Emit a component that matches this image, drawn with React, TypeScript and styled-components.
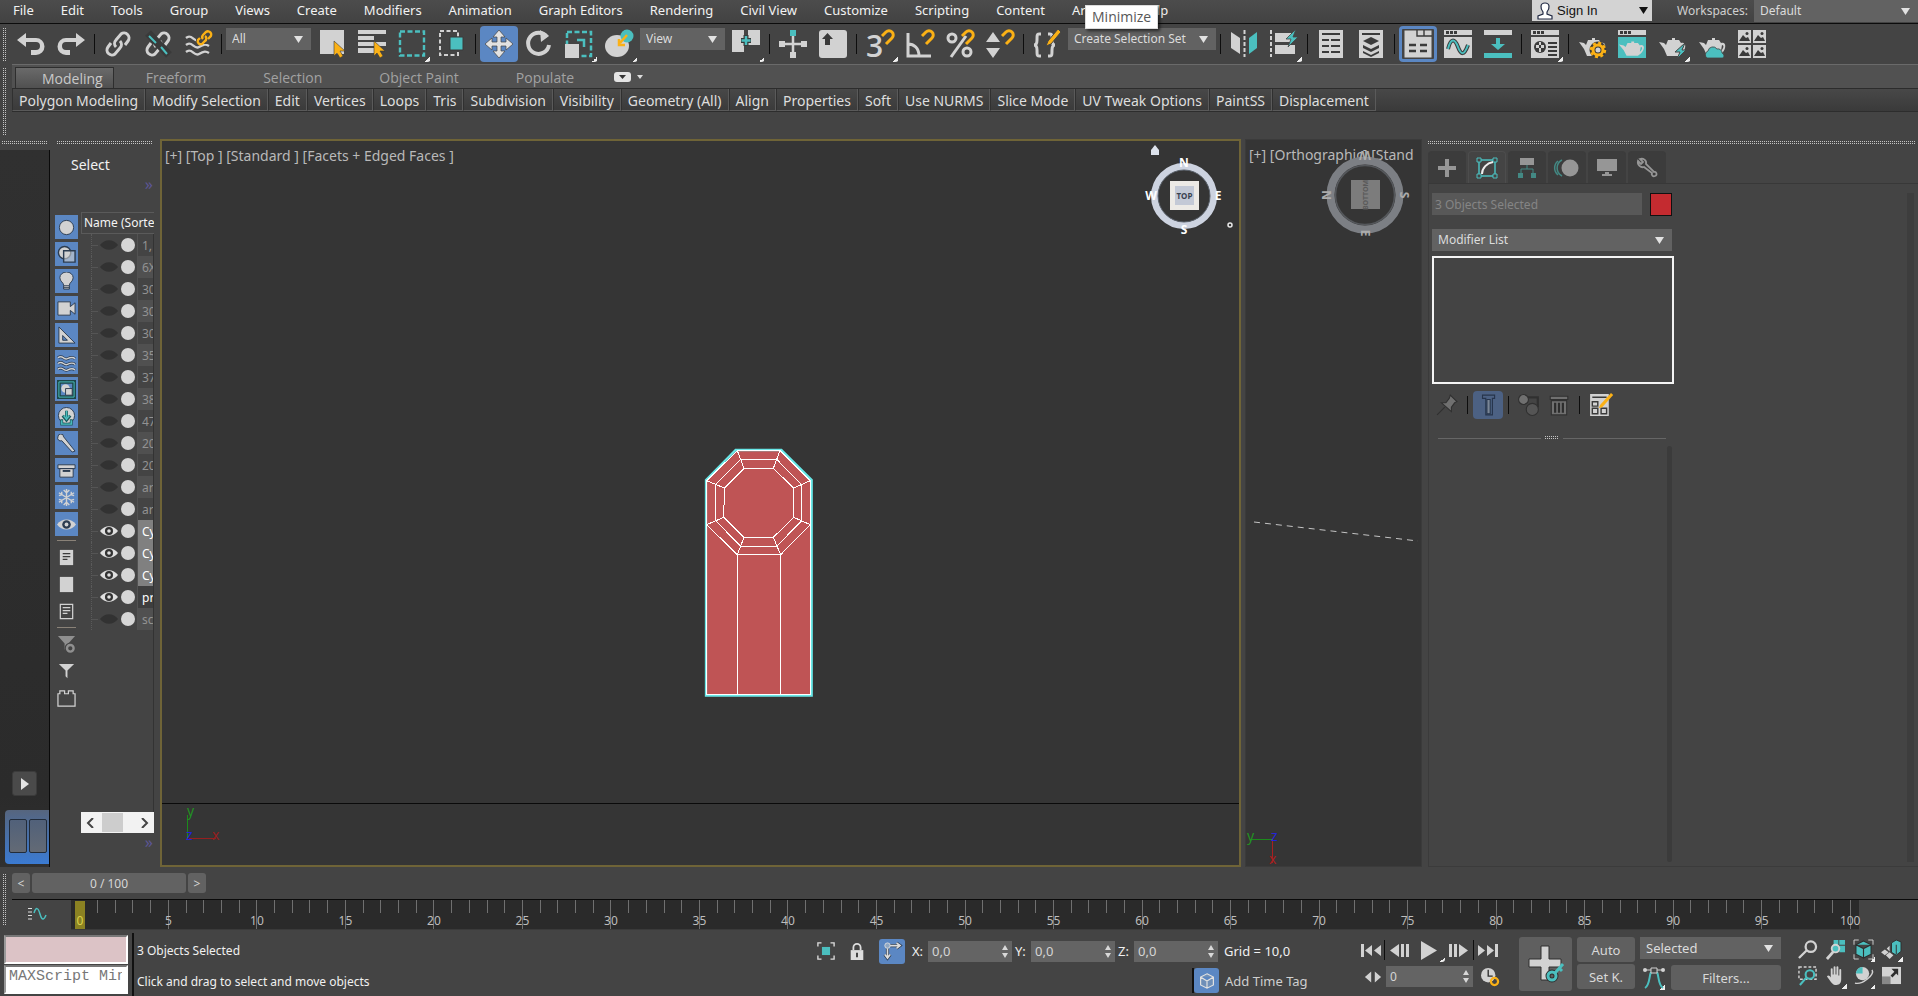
import React from 'react';
import styled, { createGlobalStyle, css } from 'styled-components';

const Global = createGlobalStyle`
  * { box-sizing: border-box; }
  body { margin: 0; background: #444; color: #e4e4e4; font: 12px/16px 'Noto Sans', 'Open Sans', sans-serif; overflow: hidden; }
  button, input, select { font: inherit; color: inherit; margin: 0; padding: 0; border: 0; border-radius: 0; background: none; }
  ul { list-style: none; margin: 0; padding: 0; }
  svg { display: block; }
`;

const L = '#d2d2d2';
const T = '#4bbfbf';
const Y = '#fbb116';
const D = '#3a3a3a';

const dots = css`
  background-image: linear-gradient(90deg, transparent 50%, #444 50%), linear-gradient(#c4c4c4 50%, transparent 50%);
  background-size: 2px 2px;
`;

const Page = styled.div`display: flex; flex-direction: column; height: 100vh;`;
const VGrip = styled.i`flex: none; width: 3px; margin: 4px 6px 3px 3px; ${dots}`;
const HGrip = styled.i<{ $inset?: number }>`flex: none; display: block; height: 4px; margin: 2px 2px 0 ${p => p.$inset ?? 0}px; ${dots}`;

/* Menu bar */
const MenuBar = styled.header`
  display: flex; justify-content: space-between; height: 24px; position: relative;
  border-bottom: 1px solid #0c0c0c; background: linear-gradient(#4c4c4c, #424242);
`;
const Menus = styled.nav`display: flex; height: 20px;`;
const MenuItem = styled.button`padding: 0 14px 0 13px; font-family: 'Noto Sans', sans-serif; font-size: 13px; line-height: 20px; color: #f2f2f2; white-space: nowrap;`;
const Account = styled.div`display: flex; align-items: flex-start; color: #cfcfcf;`;
const SignIn = styled.button`
  display: flex; align-items: center; gap: 4px; width: 120px; height: 21px; padding: 0 4px 0 5px; margin-right: 25px;
  background: #d3d3d3; color: #111; font: 13px 'Liberation Sans', sans-serif;
  span { flex: 1; text-align: left; }
`;
const WorkLabel = styled.label`font-size: 12px; line-height: 21px; margin-right: 6px;`;
const Tooltip = styled.div`
  position: absolute; left: 1085px; top: 5px; z-index: 3; height: 24px; padding: 0 6px;
  background: #fff; border: 1px solid #dcdcdc; box-shadow: 2px 2px 3px #0009; color: #575757;
  font: 14px/22px 'Open Sans', sans-serif;
`;

/* Select box */
const SelectWrap = styled.div<{ $w: number; $h?: number }>`
  display: grid; flex: none; width: ${p => p.$w}px; height: ${p => p.$h ?? 22}px; background: #626262; align-items: center;
  > * { grid-area: 1 / 1; }
  > svg { justify-self: end; margin-right: 8px; pointer-events: none; }
`;
const Native = styled.select`appearance: none; width: 100%; height: 100%; padding-left: 6px; color: #dcdcdc; outline: 0;`;
const Down = ({ c = '#e2e2e2' }: { c?: string }) => <svg width="9" height="7" viewBox="0 0 9 7"><path d="M0 0h9L4.500 7z" fill={c} /></svg>;
function Select({ w, h, label, value, id }: { w: number; h?: number; label: string; value: string; id?: string }) {
  return <SelectWrap $w={w} $h={h}><Native id={id} aria-label={label}><option>{value}</option></Native><Down /></SelectWrap>;
}

/* Main toolbar */
const ToolBar = styled.div`display: flex; height: 40px;`;
const Tools = styled.div`display: flex; gap: 2px; > div { margin-top: 4px; font-size: 12px; }`;
const ToolButton = styled.button<{ $on?: boolean; $ring?: boolean; $fly?: boolean }>`
  flex: none; display: grid; place-items: center; width: 38px; height: 36px; margin-top: 2px; border-radius: 4px;
  ${p => p.$on && 'background: #5b87c3;'}
  ${p => p.$ring && 'box-shadow: inset 0 0 0 3px #5b87c3;'}
  ${p => p.$fly && 'background: linear-gradient(135deg, transparent 50%, #eee 50%) right 1px bottom 0 / 5px 5px no-repeat;'}
`;
const Sep = styled.i<{ $h?: number }>`
  flex: none; width: 5px; height: ${p => p.$h ?? 20}px; margin-top: 10px;
  background: linear-gradient(#0d0d0d, #0d0d0d) center / 1px 100% no-repeat;
`;

const link = <g fill="none" stroke={L} strokeWidth="3"><path d="M12 17a5 5 0 0 1 0-7l5-6a5 5 0 0 1 7 7l-3 4" /><path d="M16 11a5 5 0 0 1 0 7l-5 6a5 5 0 0 1-7-7l3-4" /></g>;
const magnet = <path d="M16 6l4-4a4 4 0 0 1 6 6l-6 6" fill="none" stroke={Y} strokeWidth="3" />;
const cursor = <path d="M16 11v15l3-3 3 5 3-2-3-5h5z" fill={Y} stroke={D} strokeWidth=".6" />;
const teapot = <path d="M10 10h4V8h3v2h4l2 3c5-2 6 5 1 10l-3 3H9l-3-7-5-7 5 1 2 2zM24 15l-1 6c3-3 3-6 1-6z" fill={L} fillRule="evenodd" />;
const windowTop = <><path d="M0 0h28v5H0z" fill={L} /><path d="M2 1h3v3H2zM6 1h3v3H6zM10 1h3v3h-3z" fill={D} /></>;
const waves = (c: string, w: number) => <path d="M2 8c6-5 8 5 13 2s7-3 10-1M2 15c6-5 8 5 13 2s7-3 10-1M2 22c6-5 8 5 13 2s7-3 10-1" fill="none" stroke={c} strokeWidth={w} />;

const art: Record<string, React.ReactNode> = {
  undo: <path d="M9 3v5h10a8 8 0 0 1 0 17h-5v-5h5a4 4 0 0 0 0-8H9v5L0 10z" fill={L} />,
  redo: <path d="M19 3v5H9a8 8 0 0 0 0 17h4v-5H9a4 4 0 0 1 0-8h10v5l9-7z" fill={L} />,
  link,
  unlink: <><g>{link}</g><path d="M4 3l21 22" stroke={D} strokeWidth="8" /><path d="M5 6l7 7M17 17l6 7" stroke={T} strokeWidth="2" /></>,
  bind: <>{waves(L, 2.4)}<path d="M12 0h16v14H12z" fill="#444" /><g fill="none" stroke={Y} strokeWidth="2.400"><path d="M19 9a3 3 0 0 1 0-4l3-3a3 3 0 0 1 4 5l-2 2" /><path d="M21 6a3 3 0 0 1 0 5l-3 3a3 3 0 0 1-4-4l2-2" /></g></>,
  pick: <><path d="M2 0h24v24H2z" fill={L} />{cursor}</>,
  byName: <><path d="M0 0h28v4H0zM0 6h16v4H0zM0 12h28v4H0zM0 18h16v5H0z" fill={L} />{cursor}</>,
  region: <path d="M2 1.500h24v24H2z" fill="none" stroke={T} strokeWidth="2.400" strokeDasharray="5 2.500" />,
  windowSel: <><path d="M2 1h18v24H2z" fill="none" stroke={L} strokeWidth="2" strokeDasharray="4 2.500" /><path d="M12 7h13v13H12z" fill={T} stroke={D} /></>,
  move: <path d="M14 0l6 7h-4v5h5V8l7 6-7 6v-4h-5v5h4l-6 7-6-7h4v-5H7v4l-7-6 7-6v4h5V7H8z" fill="#e2e2e2" stroke="#444" strokeWidth=".7" />,
  rotate: <><path d="M22 7a10.500 10.500 0 1 0 2 8" fill="none" stroke={L} strokeWidth="4" /><path d="M15 0l9 6-8 6z" fill={L} /></>,
  scale: <><path d="M2 2h24v24H2z" fill="none" stroke={T} strokeWidth="2.500" strokeDasharray="5 2.500" /><path d="M0 14h14v14H0z" fill={L} /><path d="M12 10h7v7" fill="none" stroke={T} strokeWidth="2.500" /></>,
  place: <><ellipse cx="12" cy="16" rx="12" ry="11" fill={L} /><circle cx="22" cy="6" r="6.500" fill={T} /><path d="M22 5l-7 8M14 9v6h6" fill="none" stroke={Y} strokeWidth="2.500" /></>,
  pivot: <><path d="M0 0h12v22H0zM16 0h12v15H16z" fill={L} /><path d="M14 5v11M9 10.500h10" stroke={D} strokeWidth="5" /><path d="M14 6v9M9.500 10.500h9" stroke={T} strokeWidth="2.500" /></>,
  manip: <><path d="M14 6v18M4 14h20" stroke={L} strokeWidth="2.500" /><path d="M0 11h6v6H0zM22 11h6v6h-6zM11 22h6v6h-6z" fill={L} /><path d="M11 0h6v6h-6z" fill={T} /></>,
  keyb: <><rect width="28" height="28" rx="3" fill={L} /><path d="M8.500 3l5.500 6h-3v6H6V9H3z" fill={D} /></>,
  snap: <><text x="0" y="27" fontSize="30" fontWeight="600" fontFamily="Open Sans, sans-serif" fill={L}>3</text>{magnet}</>,
  angle: <><path d="M2 3v23h23M2 14c6 0 11 4 11 12" fill="none" stroke={L} strokeWidth="3" />{magnet}</>,
  percent: <><g fill="none" stroke={L} strokeWidth="3"><circle cx="6" cy="8" r="4" /><circle cx="21" cy="22" r="4" /><path d="M20 6L5 27" /></g>{magnet}</>,
  spinner: <><path d="M7 2l7 10H0zM7 28l7-10H0z" fill={L} />{magnet}</>,
  braces: <><path d="M8 4H6c-2 0-2 1-2 6 0 3-1 5-3 5 2 0 3 2 3 5 0 5 0 6 2 6h2M15 4h2c2 0 2 1 2 6 0 3 1 5 3 5-2 0-3 2-3 5 0 5 0 6-2 6h-2" fill="none" stroke={L} strokeWidth="3" /><path d="M25-1l3 3-10 12-5 2 2-5z" fill={Y} stroke="#444" /></>,
  mirror: <><path d="M1 2l9 6v16l-9-6z" fill={L} /><path d="M27 2l-8 6v16l8-6z" fill={T} /><path d="M14.500 0v27" stroke={L} strokeWidth="2" strokeDasharray="4 2" /></>,
  align: <><path d="M1 0v27" stroke={L} strokeWidth="2" strokeDasharray="4 2" /><path d="M5 3h16v9H5zM5 15h20v9H5z" fill={L} /><path d="M26-1l-10 10h5l-3 8 10-10h-5z" fill={T} stroke="#444" strokeWidth=".8" /></>,
  explorer: <><path d="M2 0h24v28H2z" fill={L} /><path d="M5 4h18M5 10h7M14 10h9M5 16h7M14 16h9M5 22h7M14 22h9" stroke={D} strokeWidth="2" /></>,
  layers: <><path d="M2 0h24v28H2z" fill={L} /><path d="M5 4h18" stroke={D} strokeWidth="2" /><path d="M14 7l8 4-8 4-8-4zM6 15l8 4 8-4v3l-8 4-8-4zM6 21l8 4 8-4v2l-8 4-8-4z" fill={D} /></>,
  ribbon: <><path d="M0 0h28v28H0z" fill={L} stroke="#444" /><path d="M13 0v6h15M20 0v6" fill="none" stroke={D} strokeWidth="1.400" /><path d="M5 15h7M16 15h7M5 21h7M16 21h7" stroke={D} strokeWidth="2.400" /></>,
  curve: <>{windowTop}<path d="M0 7h28v21H0z" fill={L} /><path d="M4 19c3-12 7-10 10-2s6 9 10-2" fill="none" stroke={D} strokeWidth="4" /><path d="M4 19c3-12 7-10 10-2s6 9 10-2" fill="none" stroke={T} strokeWidth="2" /></>,
  schematic: <><path d="M0 0h28v5H0z" fill={L} /><path d="M12 8h4v6h5l-7 6-7-6h5zM0 23h28v5H0z" fill={T} /></>,
  material: <>{windowTop}<path d="M0 7h28v21H0z" fill={L} /><circle cx="9" cy="17" r="6" fill={D} /><path d="M5 15h3v3H5zM10 15h3v3h-3zM8 12h2v3H8zM8 18h2v4H8z" fill={L} /><path d="M17 13h9M17 17h9M17 21h9M17 25h9" stroke={D} strokeWidth="1.800" /></>,
  setup: <>{teapot}<circle cx="20" cy="20" r="5.500" fill="none" stroke={D} strokeWidth="6" /><circle cx="20" cy="20" r="5" fill="none" stroke={Y} strokeWidth="3" /><circle cx="20" cy="20" r="7" fill="none" stroke={Y} strokeWidth="2.500" strokeDasharray="3 2.500" /></>,
  frame: <>{windowTop}<path d="M0 7h28v21H0z" fill={T} /><g transform="translate(0 5) scale(.95 .8)">{teapot}</g></>,
  render: <>{teapot}<path d="M27 13l-10 9h5l-3 7 9-9h-4z" fill={T} stroke="#444" /></>,
  cloud: <>{teapot}<path d="M9 28a4 4 0 0 1 1-7 5 5 0 0 1 9-2 4 4 0 0 1 5 4 3 3 0 0 1 1 5z" fill={T} stroke="#444" strokeWidth=".8" /></>,
  gallery: <>{[0, 15].map(x => [0, 15].map(y => <g key={`${x}-${y}`} transform={`translate(${x} ${y})`}><path d="M0 0h13v13H0z" fill={L} /><path d="M1 11l4-6 3 3 2-1 2 4z" fill={D} /><circle cx="9" cy="3.500" r="1.500" fill={D} /></g>))}</>,
};
function Art({ n, s = 28 }: { n: string; s?: number }) {
  return <svg width={s} height={s} viewBox="0 0 28 28" overflow="visible" aria-hidden="true">{art[n]}</svg>;
}
function Tool({ n, on, ring, fly }: { n: string; on?: boolean; ring?: boolean; fly?: boolean }) {
  return <ToolButton aria-label={n} $on={on} $ring={ring} $fly={fly}><Art n={n} /></ToolButton>;
}

/* Ribbon */
const RibbonArea = styled.section`display: flex; height: 75px;`;
const Ribbon = styled.div`flex: 1; min-width: 0; font-family: 'Open Sans', sans-serif; font-size: 14px;`;
const RibbonTabs = styled.div`display: flex; align-items: flex-end; height: 25px; padding-left: 3px; border-top: 1px solid #6a6a6a; border-bottom: 1px solid #2c2c2c; background: #515151;`;
const RibbonTab = styled.button<{ $on?: boolean }>`
  height: 21px; padding: 0 28px 0 29px; line-height: 21px; color: #a2a2a2; white-space: nowrap;
  ${p => p.$on && 'padding: 0 10px 0 26px; margin-right: 3px; color: #c9c9c9; border: 1px solid #2e2e2e; border-bottom: 0; background: linear-gradient(#6a6a6a, #505050);'}
`;
const RibbonTools = styled.div`display: flex; align-items: center; gap: 6px; height: 18px; margin-left: 12px; align-self: center;`;
const RibbonPanels = styled.div`display: flex; height: 23px; border-bottom: 1px solid #2d2d2d; background: linear-gradient(#484848, #3a3a3a);`;
const RibbonPanel = styled.button`padding: 1px 6px 0; line-height: 22px; color: #dedede; white-space: nowrap; border: 1px solid #5a5a5a; border-left-color: #303030; border-top: 0; font-family: 'Noto Sans', sans-serif;`;

/* Workspace */
const Work = styled.main`display: flex; flex: 1; min-height: 0;`;
const Rail = styled.aside`display: flex; flex-direction: column; flex: none; width: 50px;`;
const RailBody = styled.div`
  flex: 1; margin-top: 5px; display: flex; flex-direction: column; justify-content: flex-end; align-items: flex-start;
  background: linear-gradient(#303030, #2b2b2b 90%, #303030); border-right: 1px solid #0a0a0a;
`;
const PlayTab = styled.button`display: grid; place-items: center; width: 25px; height: 25px; margin: 0 0 14px 12px; border-radius: 3px; background: #4a4a4a; border: 1px solid #3b3b3b;`;
const LayoutTab = styled.button`
  display: flex; align-self: stretch; gap: 2px; height: 54px; margin: 0 0 3px 5px; padding: 9px 2px 11px 4px; border-radius: 4px 0 0 4px;
  background: linear-gradient(#56657e, #3b7bd3);
  i { flex: 1; border: 1px solid #222c3a; border-radius: 2px; background: linear-gradient(#51617a, #636a75); }
`;
const Explorer = styled.aside`display: flex; flex-direction: column; flex: none; width: 110px; padding: 0 6px 16px 5px;`;
const ExplorerTitle = styled.h2`margin: 10px 0 0 16px; font-size: 14px; line-height: 20px; font-weight: 400; color: #f2f2f2;`;
const More = styled.button`align-self: flex-end; height: 18px; margin-right: 1px; font-size: 16px; line-height: 12px; color: #5c5696;`;
const ExplorerBody = styled.div`display: flex; flex: 1; min-height: 0; gap: 3px; margin-top: 19px;`;
const Filters = styled.div`display: flex; flex-direction: column; align-items: center; width: 23px; padding-top: 3px; gap: 3px;`;
const FilterButton = styled.button<{ $on?: boolean }>`display: grid; place-items: center; flex: none; width: 23px; height: 24px; ${p => p.$on && 'background: #5b87c3;'}`;
const FilterRule = styled.hr`width: 19px; height: 1px; margin: 1px 0; border: 0; background: #8a8278;`;
const Tree = styled.div`display: flex; flex-direction: column; width: 73px; overflow: hidden;`;
const TreeHead = styled.div`height: 22px; padding-left: 2px; line-height: 20px; white-space: nowrap; border: 1px solid #5a5a5a; border-right: 0; color: #f4f4f4; flex: none;`;
const TreeRows = styled.ul`flex: 1; border-right: 1px solid #333;`;
const TreeRow = styled.li<{ $state: string }>`
  display: grid; grid-template-columns: 18px 20px 18px 1fr; align-items: center; justify-items: center; height: 22px; color: #929292;
  > i { width: 14px; height: 14px; border-radius: 50%; background: #d6d6d6; }
  > span { justify-self: stretch; height: 22px; padding-left: 4px; line-height: 24px; overflow: hidden; border-left: 1px solid #525252; white-space: nowrap; }
  &:nth-child(even) > span { background: #505050; }
  ${p => p.$state === 'selected' && '&& > span { background: #808080; color: #fff; }'}
  ${p => p.$state === 'shown' && '&& > span { background: #3e3e3e; color: #fff; }'}
`;
const Branch = styled.b`align-self: stretch; justify-self: end; width: 8px; border-left: 1px dotted #5a5a5a; background: linear-gradient(#555, #555) left center / 6px 1px no-repeat;`;
const ScrollBar = styled.div`
  display: flex; justify-content: space-between; align-items: center; height: 21px; padding: 0 5px; background: #f2f2f2; flex: none;
  i { width: 21px; height: 19px; background: #cdcdcd; margin-right: 10px; }
`;

/* Viewports */
const Viewport = styled.section<{ $active?: boolean }>`
  position: relative; overflow: hidden; background: #353535; min-width: 0;
  ${p => p.$active ? 'flex: 1; border: 2px solid #6f6437;' : 'flex: none; width: 177px; margin-left: 4px; border: 1px solid #3b3b3b;'}
`;
const ViewLabel = styled.div`padding: 5px 0 0 3px; font-size: 14px; line-height: 20px; color: #b9b9b9; white-space: pre;`;
const Pinned = styled.svg<{ $x: string; $y: string; $right?: boolean }>`
  position: absolute; top: ${p => p.$y}; ${p => (p.$right ? 'right' : 'left')}: ${p => p.$x}; overflow: visible;
`;
const Horizon = styled.i`position: absolute; left: 0; right: 0; bottom: 61px; height: 1px; background: #0a0a0a;`;

/* Command panel */
const Command = styled.aside`display: flex; flex-direction: column; flex: none; width: 496px; padding-left: 6px;`;
const CommandTabs = styled.div`display: flex; gap: 2px; margin-top: 6px; border-bottom: 1px solid #383838;`;
const CommandTab = styled.button<{ $on?: boolean }>`display: grid; place-items: center; width: 38px; height: 32px; border-radius: 4px 4px 0 0; background: ${p => (p.$on ? '#444' : '#3c3c3c')}; border: 1px solid ${p => (p.$on ? '#4d4d4d' : '#3c3c3c')}; border-bottom: 0;`;
const CommandBody = styled.div`display: flex; justify-content: space-between; flex: 1; padding: 9px 4px 4px 3px; border-left: 1px solid #3b3b3b; border-bottom: 1px solid #3b3b3b;`;
const Stack = styled.div`display: flex; flex-direction: column; width: 242px;`;
const NameRow = styled.div`display: flex; gap: 8px; margin-bottom: 13px;`;
const NameField = styled.input`width: 210px; height: 22px; padding-left: 3px; background: #585858; color: #858585;`;
const Swatch = styled.button`width: 22px; height: 23px; background: #c42b30; border: 1px solid #111;`;
const ModifierBox = styled.div`height: 128px; margin-top: 5px; border: 2px solid #f4f4f4;`;
const StackTools = styled.div`display: flex; align-items: center; height: 28px; margin-top: 7px; > i { margin: 0 3px; } `;
const StackButton = styled.button<{ $on?: boolean }>`display: grid; place-items: center; width: 30px; height: 28px; border-radius: 4px; ${p => p.$on && 'background: #4c6183;'}`;
const Divider = styled.div`display: flex; align-items: center; gap: 4px; margin: 17px 8px 0 6px; &::before, &::after { content: ''; flex: 1; height: 1px; background: #666; } i { width: 14px; height: 4px; ${dots} }`;
const Rollout = styled.div`align-self: flex-end; flex: 1; width: 5px; margin: 6px 2px 0 0; border-radius: 3px; background: #3b3b3b;`;
const OuterTrack = styled.div`width: 7px; background: #3d3d3d;`;

/* Time line */
const TimeArea = styled.section`display: flex; height: 63px;`;
const TimeGrip = styled(VGrip)`margin-top: 7px; margin-bottom: 4px;`;
const TimeMain = styled.div`flex: 1; min-width: 0;`;
const Slider = styled.div`display: flex; gap: 2px; height: 32px; padding-top: 6px;`;
const SliderButton = styled.button<{ $w: number }>`width: ${p => p.$w}px; height: 20px; border-radius: 3px; background: #626262; color: #d6d6d6; line-height: 21px; text-align: center;`;
const Ruler = styled.div`display: flex; height: 31px; border-top: 1px solid #0a0a0a; padding-right: 59px;`;
const MiniCurve = styled.button`flex: none; width: 59px; padding: 0 0 2px 16px; text-align: left;`;
const Frames = styled.div`display: flex; flex: 1; min-width: 0; background: #2a2a2a; border-bottom: 1px solid #3a3a3a;`;
const Frame = styled.div<{ $major: boolean; $now: boolean }>`
  flex: 1 1 0; width: 0; display: flex; justify-content: center; align-items: flex-end; color: #bdbdbd; line-height: 16px; white-space: nowrap;
  background: linear-gradient(#707070, #707070) center top / 1px ${p => (p.$major ? 30 : 13)}px no-repeat;
  ${p => p.$now && 'background: linear-gradient(#8b8222, #8b8222) center bottom / 10px 28px no-repeat; color: #dcd24a;'}
`;

/* Status bar */
const Status = styled.footer`display: flex; height: 66px; color: #f0f0f0;`;
const Listener = styled.div`display: flex; flex-direction: column; flex: none; gap: 1px; width: 124px; margin: 5px 4px 2px 4px;`;
const ListenerLine = styled.input<{ $pink?: boolean }>`
  width: 124px; height: 29px; padding: 0 4px 6px 3px; color: #777; font: 15px 'Liberation Mono', monospace;
  background: ${p => (p.$pink ? '#dcc3c6' : '#fff')}; border: 2px solid #fff; border-top-color: #777; border-left-color: #999;
  &::placeholder { color: #777; opacity: 1; }
`;
const Prompt = styled.div`flex: 1; min-width: 0; padding: 10px 0 0 3px; border-left: 2px solid #111; margin-top: 3px; p { margin: 0 0 15px; line-height: 16px; font-size: 12px; white-space: nowrap; }`;
const Transform = styled.div`display: flex; flex-direction: column; flex: none; width: 544px;`;
const CoordRow = styled.div`display: flex; align-items: center; height: 26px; margin-top: 8px; font-size: 13px;`;
const TagRow = styled.div`display: flex; align-items: center; gap: 6px; height: 25px; margin: 4px 0 0 375px; border-left: 2px solid #111; color: #cfcfcf; font-size: 13px;`;
const IconButton = styled.button<{ $on?: boolean; $w: number }>`flex: none; display: grid; place-items: center; width: ${p => p.$w}px; height: 25px; border-radius: 3px; ${p => p.$on && 'background: #5b87c3;'}`;
const Coords = styled.div`display: flex; align-items: center; margin-left: 4px;`;
const CoordLabel = styled.label`width: 19px; padding-left: 3px; line-height: 22px; white-space: nowrap;`;
const GridSize = styled.span`margin-left: 6px; white-space: nowrap;`;
const SpinBox = styled.div<{ $w: number }>`display: flex; align-items: center; flex: none; width: ${p => p.$w}px; height: 21px; padding: 0 4px; background: #646464; color: #d5d5d5; input { flex: 1; width: 0; height: 21px; }`;
function Spin({ w, label, value, id }: { w: number; label: string; value: string; id: string }) {
  return <SpinBox $w={w}><input id={id} aria-label={label} defaultValue={value} /><svg width="6" height="13" viewBox="0 0 6 13"><path d="M3 0l3 5H0zM3 13l3-5H0z" fill="#d8d8d8" /></svg></SpinBox>;
}
const Playback = styled.div`display: flex; flex-direction: column; flex: none; width: 158px; padding-top: 7px;`;
const PlayRow = styled.div`display: flex; align-items: center; height: 25px; gap: 1px; margin-bottom: 2px; > i { margin: 0; }`;
const Keys = styled.div`display: flex; flex: none; gap: 5px; width: 274px; padding-top: 7px; font-size: 13px;`;
const SoftButton = styled.button<{ $w: number; $h: number }>`display: grid; place-items: center; width: ${p => p.$w}px; height: ${p => p.$h}px; border-radius: 3px; background: #5f5f5f; color: #d8d8d8;`;
const Col = styled.div`display: flex; flex-direction: column; gap: 2px;`;
const TangentRow = styled.div`display: flex; align-items: flex-end; gap: 3px; height: 29px;`;
const TangentButton = styled(IconButton)`background: linear-gradient(135deg, transparent 50%, #eee 50%) right 3px bottom 0 / 5px 5px no-repeat;`;
const PlayButton = styled(IconButton)`background: linear-gradient(135deg, transparent 50%, #eee 50%) right 0 bottom 0 / 5px 5px no-repeat;`;
const NavGrid = styled.div`display: grid; flex: none; grid-template: 26px 27px / repeat(4, 28px); width: 125px; margin-top: 6px;`;
const NavButton = styled.button<{ $fly?: boolean }>`display: grid; place-items: center; ${p => p.$fly && 'background: linear-gradient(135deg, transparent 50%, #eee 50%) right 2px bottom 0 / 5px 5px no-repeat;'}`;

const menus = ['File', 'Edit', 'Tools', 'Group', 'Views', 'Create', 'Modifiers', 'Animation', 'Graph Editors', 'Rendering', 'Civil View', 'Customize', 'Scripting', 'Content', 'Arnold', 'Help'];
const panels = ['Polygon Modeling', 'Modify Selection', 'Edit', 'Vertices', 'Loops', 'Tris', 'Subdivision', 'Visibility', 'Geometry (All)', 'Align', 'Properties', 'Soft', 'Use NURMS', 'Slice Mode', 'UV Tweak Options', 'PaintSS', 'Displacement'];
const rows: [string, string][] = [
  ...['1,', '6X', '30', '30', '30', '35', '37', '38', '47', '20', '20', 'ar', 'ar'].map(n => [n, 'hidden'] as [string, string]),
  ['Cy', 'selected'], ['Cy', 'selected'], ['Cy', 'selected'], ['pr', 'shown'], ['sc', 'hidden'],
];

const S = '#2c3c50';
const eye = (c: string, p: string) => <><path d="M0 10C5 3 15 3 20 10 15 17 5 17 0 10z" fill={c} /><circle cx="10" cy="10" r="4.500" fill={p} /><circle cx="10" cy="10" r="2" fill={c} /></>;
const filterArt: [string, React.ReactNode][] = [
  ['Geometry', <circle cx="10" cy="10" r="7.500" fill={L} stroke={S} />],
  ['Shapes', <g fill={L} stroke={S} strokeWidth="1.500"><circle cx="8" cy="8" r="6.500" /><path d="M7 6h12v12H7z" fillOpacity=".6" /></g>],
  ['Lights', <path d="M7 14c0-3-4-4-4-8a7 6 0 0 1 14 0c0 4-4 5-4 8v4H7zM7 14.500h6M7 16.500h6" fill={L} stroke={S} />],
  ['Cameras', <path d="M1 3h13v5l5-4v12l-5-4v5H1z" fill={L} stroke={S} />],
  ['Helpers', <path d="M2 1l17 17H2zM6 10l5 5H6z" fill={L} fillRule="evenodd" stroke={S} />],
  ['Space Warps', <><path d="M1 5c5-4 6 3 10 1s6-2 8 0M1 11c5-4 6 3 10 1s6-2 8 0M1 17c5-4 6 3 10 1s6-2 8 0" fill="none" stroke={S} strokeWidth="3" /><path d="M1 5c5-4 6 3 10 1s6-2 8 0M1 11c5-4 6 3 10 1s6-2 8 0M1 17c5-4 6 3 10 1s6-2 8 0" fill="none" stroke={L} strokeWidth="1.500" /></>],
  ['Groups', <><path d="M2 2h16v16H2z" fill="none" stroke="#1d4648" strokeWidth="4" /><path d="M2 2h16v16H2z" fill="none" stroke={T} strokeWidth="1" /><circle cx="9" cy="9" r="4.500" fill={L} /><path d="M9 9h7v7H9z" fill={L} stroke={S} /></>],
  ['XRefs', <><circle cx="10" cy="9" r="8.500" fill={L} stroke={S} /><path d="M10 4v7M6 9l4 5 4-5M5 13v5h10v-5" fill="none" stroke="#1d5a5c" strokeWidth="3" /><path d="M10 4v7M7 9l3 4 3-4M5 14v4h10v-4" fill="none" stroke={T} strokeWidth="1.500" /></>],
  ['Bones', <path d="M1 3a3 3 0 0 1 6 0l12 15-3 1L5 7a3 3 0 0 1-4-4z" fill={L} stroke={S} />],
  ['Containers', <><path d="M1 4h18v4H1zM3 8h14v9H3z" fill={L} stroke={S} /><path d="M6 10.500h8" stroke={S} strokeWidth="2" /></>],
  ['Frozen', <path d="M10 1v18M2 5l16 10M18 5L2 15M7 2l3 3 3-3M7 18l3-3 3 3M2 8l3-1V4M18 12l-3 1v3M18 8l-3-1V4M2 12l3 1v3" fill="none" stroke={L} strokeWidth="1.500" />],
  ['Hidden', eye(L, S)],
];
const lowerFilters: [string, React.ReactNode][] = [
  ['Display All', <><path d="M3 2h14v16H3z" fill={L} /><path d="M6 6h8M6 9h8M6 12h5" stroke={D} strokeWidth="1.300" /></>],
  ['Display None', <path d="M3 2h14v16H3z" fill={L} />],
  ['Invert', <path d="M3.500 2.500h13v15h-13zM6 6h8M6 9h8M6 12h5" fill="none" stroke={L} strokeWidth="1.300" />],
];
const funnels: [string, React.ReactNode][] = [
  ['Filter settings', <><path d="M1 1h18l-7 8v9l-4-3V9z" fill="#8f8f8f" /><circle cx="14" cy="14" r="3.500" fill="none" stroke="#444" strokeWidth="5" /><circle cx="14" cy="14" r="3.500" fill="none" stroke="#8f8f8f" strokeWidth="2.500" /></>],
  ['Filter', <path d="M2 2h16l-7 7v8l-2-2V9z" fill={L} />],
  ['Container', <path d="M1 5h2V2h5v3h4V2h5v3h2v13H1z" fill="none" stroke={L} strokeWidth="1.300" />],
];
const FilterIcon = ({ children }: { children: React.ReactNode }) => <svg width="19" height="19" viewBox="0 0 20 20">{children}</svg>;

const C = '#969696';
const commandArt: [string, React.ReactNode][] = [
  ['Create', <path d="M8 1h4v7h7v4h-7v7H8v-7H1V8h7z" fill={C} />],
  ['Modify', <><path d="M2 2h16v16H2z" fill="none" stroke={T} strokeWidth="1.500" /><path d="M0 0h4v4H0zM16 0h4v4h-4zM0 16h4v4H0zM16 16h4v4h-4z" fill="#444" stroke={T} /><path d="M5 16c0-6 5-11 11-12" fill="none" stroke="#eee" strokeWidth="2" /></>],
  ['Hierarchy', <><path d="M3 0h14v7H3z" fill={C} /><path d="M10 7v4M4 15v-4h12v4" fill="none" stroke="#438984" /><path d="M1 15h5v5H1zM14 15h5v5h-5z" fill="#438984" /></>],
  ['Motion', <><circle cx="13" cy="10" r="8.500" fill={C} /><path d="M5 2a9 9 0 0 0 0 16M1 3a9 9 0 0 0 0 14" fill="none" stroke="#438984" strokeWidth="1.500" /></>],
  ['Display', <path d="M0 1h20v12H0zM8 14h4v2h3v2H5v-2h3z" fill={C} />],
  ['Utilities', <path d="M1 3l3 3 2-2-3-3c3-1 7 1 6 5l8 8c2-1 4 3 1 4-2 1-4-1-3-3L7 9C4 10 0 7 1 3z" fill="none" stroke={C} strokeWidth="1.800" />],
];

const K = '#2e2e2e';
const Cube = <path d="M10 1l8 4v10l-8 4-8-4V5zM2 5l8 4 8-4M10 9v10" fill={T} stroke={K} strokeWidth="1.200" />;
const nav: [string, React.ReactNode, boolean?][] = [
  ['Zoom', <path d="M9 11L1 19M8 7a5.500 5.500 0 1 0 11 0a5.500 5.500 0 1 0-11 0" fill="none" stroke={L} strokeWidth="2.400" />],
  ['Zoom All', <><path d="M8 0h5v5H8zM14 0h6v5h-6zM14 6h6v7h-6z" fill={T} /><path d="M8 12l-7 8" stroke={L} strokeWidth="3" /><circle cx="10" cy="9" r="4" fill={T} stroke={L} strokeWidth="2" /></>],
  ['Zoom Extents', <>{Cube}<path d="M0 5V0h5M15 0h5v5M20 15v5h-5M5 20H0v-5" fill="none" stroke={L} /></>, true],
  ['Zoom Extents All', <><path d="M10 3l5-3 5 2v10l-5 4-5-3z" fill={T} stroke={K} /><path d="M15 5v10" stroke={K} /><path d="M3 10l4 3-4 3-4-3zM8 13l4 3-4 4-4-4zM8 6v6l-3-3z" fill={L} /></>, true],
  ['Zoom Region', <><path d="M1 1h18v13H1z" fill="none" stroke={L} strokeDasharray="3 2" strokeWidth="1.500" /><path d="M9 12l-7 8M8 9a4.500 4.500 0 1 0 9 0a4.500 4.500 0 1 0-9 0" fill="none" stroke={T} strokeWidth="2.200" /></>],
  ['Pan', <path d="M5 12V3c0-1 2-1 2 0v6h1V1c0-1 2-1 2 0v8h1V1c0-1 2-1 2 0v9h1V4c0-1 2-1 2 0v10c0 4-2 6-5 6-5 0-6-4-10-9 1-2 3-1 4 1z" fill={L} />, true],
  ['Orbit', <><circle cx="9" cy="8" r="7" fill={L} /><path d="M9 1v7H2a7 7 0 0 1 7-7z" fill={T} /><path d="M19 4c3 5-10 16-18 14" fill="none" stroke={L} strokeWidth="1.500" /></>, true],
  ['Maximize', <><path d="M0 1h20v18H0z" fill={L} /><path d="M0 11h9v8H0z" fill="#888" /><path d="M10 3h7v7l-2-2-4 4-2-2 4-4z" fill={K} /></>],
];

const Svg20 = ({ w = 20, children }: { w?: number; children: React.ReactNode }) => <svg width={w} height={w} viewBox="0 0 20 20" overflow="visible">{children}</svg>;
const DIM = '#707070';

export default function App() {
  return (
    <Page>
      <Global />
      <MenuBar>
        <Menus>{menus.map(m => <MenuItem key={m}>{m}</MenuItem>)}</Menus>
        <Account>
          <SignIn>
            <svg width="16" height="18" viewBox="0 0 16 18"><path d="M8 1c5 0 5 5 2 9v2l5 2v3H1v-3l5-2v-2C3 6 3 1 8 1z" fill="#fff" stroke="#222b45" strokeWidth="1.200" /></svg>
            <span>Sign In</span><Down c="#111" />
          </SignIn>
          <WorkLabel htmlFor="workspace">Workspaces:</WorkLabel>
          <Select id="workspace" w={164} label="Workspaces" value="Default" />
        </Account>
        <Tooltip role="tooltip">Minimize</Tooltip>
      </MenuBar>

      <ToolBar>
        <VGrip />
        <Tools>
          <Tool n="undo" /><Tool n="redo" /><Sep />
          <Tool n="link" /><Tool n="unlink" /><Tool n="bind" /><Sep />
          <Select w={85} label="Selection filter" value="All" />
          <Tool n="pick" /><Tool n="byName" /><Tool n="region" fly /><Tool n="windowSel" /><Sep />
          <Tool n="move" on /><Tool n="rotate" /><Tool n="scale" fly /><Tool n="place" fly />
          <Select w={85} label="Reference coordinates" value="View" />
          <Tool n="pivot" fly /><Sep /><Tool n="manip" /><Tool n="keyb" /><Sep />
          <Tool n="snap" fly /><Tool n="angle" /><Tool n="percent" /><Tool n="spinner" /><Sep />
          <Tool n="braces" />
          <Select w={148} label="Named selection sets" value="Create Selection Set" />
          <Sep /><Tool n="mirror" /><Tool n="align" fly /><Sep />
          <Tool n="explorer" /><Tool n="layers" /><Sep />
          <Tool n="ribbon" ring /><Tool n="curve" /><Tool n="schematic" /><Sep />
          <Tool n="material" fly /><Sep />
          <Tool n="setup" /><Tool n="frame" /><Tool n="render" fly /><Tool n="cloud" /><Tool n="gallery" />
        </Tools>
      </ToolBar>

      <RibbonArea>
        <VGrip />
        <Ribbon>
          <RibbonTabs>
            {['Modeling', 'Freeform', 'Selection', 'Object Paint', 'Populate'].map((t, i) => <RibbonTab key={t} $on={i === 0}>{t}</RibbonTab>)}
            <RibbonTools>
              <svg width="17" height="10" viewBox="0 0 17 10"><rect width="17" height="10" rx="3" fill="#e4e4e4" /><path d="M5 3h7l-3.500 4z" fill="#333" /></svg>
              <svg width="6" height="4" viewBox="0 0 6 4"><path d="M0 0h6L3 4z" fill="#ddd" /></svg>
            </RibbonTools>
          </RibbonTabs>
          <RibbonPanels>{panels.map(p => <RibbonPanel key={p}>{p}</RibbonPanel>)}</RibbonPanels>
        </Ribbon>
      </RibbonArea>

      <Work>
        <Rail>
          <HGrip $inset={2} />
          <RailBody>
            <PlayTab aria-label="Expand"><svg width="8" height="12" viewBox="0 0 8 12"><path d="M0 0l8 6-8 6z" fill="#e4e4e4" /></svg></PlayTab>
            <LayoutTab aria-label="Viewport layout"><i /><i /></LayoutTab>
          </RailBody>
        </Rail>

        <Explorer>
          <HGrip $inset={2} />
          <ExplorerTitle>Select</ExplorerTitle>
          <More aria-label="More tools">»</More>
          <ExplorerBody>
            <Filters>
              {filterArt.map(([n, a]) => <FilterButton key={n} $on aria-label={n}><FilterIcon>{a}</FilterIcon></FilterButton>)}
              <FilterRule />
              {lowerFilters.map(([n, a]) => <FilterButton key={n} aria-label={n}><FilterIcon>{a}</FilterIcon></FilterButton>)}
              <FilterRule />
              {funnels.map(([n, a]) => <FilterButton key={n} aria-label={n}><FilterIcon>{a}</FilterIcon></FilterButton>)}
            </Filters>
            <Tree>
              <TreeHead>Name (Sorte</TreeHead>
              <TreeRows>
                {rows.map(([n, s], i) => (
                  <TreeRow key={i} $state={s}>
                    <Branch />
                    <svg width="18" height="18" viewBox="0 0 20 20">{s === 'hidden' ? <path d="M0 10C5 3 15 3 20 10 15 17 5 17 0 10z" fill="#323232" /> : eye('#e0e0e0', '#333')}</svg>
                    <i /><span>{n}</span>
                  </TreeRow>
                ))}
              </TreeRows>
              <ScrollBar>
                <svg width="8" height="10" viewBox="0 0 8 10"><path d="M7 0L2 5l5 5" fill="none" stroke="#444" strokeWidth="2" /></svg>
                <i />
                <svg width="8" height="10" viewBox="0 0 8 10"><path d="M1 0l5 5-5 5" fill="none" stroke="#444" strokeWidth="2" /></svg>
              </ScrollBar>
            </Tree>
          </ExplorerBody>
          <More aria-label="More options">»</More>
        </Explorer>

        <Viewport $active>
          <ViewLabel>[+] [Top ] [Standard ] [Facets + Edged Faces ]</ViewLabel>
          <Pinned $x="calc(50% - 21px)" $y="289px" width="160" height="280" viewBox="0 0 480 840">
            <path d="M78 150L167 60H304L395 150V797H78z" fill="#bf5455" stroke="#69e8e8" strokeWidth="7" />
            <g fill="none" stroke="#fff" strokeWidth="3" shapeRendering="crispEdges">
              <path d="M80 152L172 62H300L391 152V793H80z" />
              <path d="M80 284L172 374H302L391 284M172 374V793M302 374V793" />
              <path d="M107 164L182 88H290L365 164V272L290 349H182L107 272z" />
              <path d="M133 174L192 115H280L341 174V262L280 322H192L131 262V230L133 220z" />
              <path d="M80 152L133 174M172 62L192 115M300 62L280 115M391 152L341 174M391 284L341 262M302 374L280 322M172 374L192 322M80 284L131 262" />
            </g>
          </Pinned>
          <Pinned $right $x="15px" $y="14px" width="80" height="76" viewBox="1144 155 80 76">
            <path d="M1151 155v-5l4-5 4 5v5z" fill="#dde2ec" />
            <circle cx="1184" cy="196" r="29.500" fill="none" stroke="#cdd3e0" strokeWidth="7" />
            <circle cx="1184" cy="196" r="26" fill="none" stroke="#596069" />
            <path d="M1170 181h29v29h-29z" fill="#eceae6" /><path d="M1175 186h19v19h-19z" fill="#c3c9d6" />
            <g fontFamily="Noto Sans, sans-serif" fontWeight="700" textAnchor="middle">
              <text x="1184.500" y="199" fontSize="8" fill="#39414f">TOP</text>
              <g fontSize="12" fill="#fff"><text x="1184" y="167">N</text><text x="1151" y="200">W</text><text x="1218" y="200">E</text><text x="1184" y="234">S</text></g>
            </g>
            <circle cx="1230" cy="225" r="2" fill="none" stroke="#e8e8e8" strokeWidth="1.500" />
          </Pinned>
          <Horizon />
          <Pinned $x="20px" $y="669px" width="60" height="34" viewBox="182 810 60 34">
            <path d="M187.500 839v-24" stroke="#1c8a1c" /><path d="M188 838.500h28" stroke="#961f1f" />
            <g fontSize="14" fontFamily="Noto Sans, sans-serif"><text x="187" y="816" fill="#239023">y</text><text x="186" y="840" fill="#2424d8">z</text><text x="212" y="840" fill="#961f1f">x</text></g>
          </Pinned>
        </Viewport>

        <Viewport>
          <ViewLabel>[+] [Orthographic] [Stand</ViewLabel>
          <Pinned $x="80px" $y="15px" width="80" height="80" viewBox="1326 156 80 80">
            <circle cx="1365" cy="196" r="34.500" fill="none" stroke="#7c7f84" strokeWidth="8" />
            <circle cx="1365" cy="196" r="29.500" fill="none" stroke="#55585c" strokeWidth="1.500" />
            <path d="M1351 181h29v29h-29z" fill="#7c7c7c" />
            <g fontFamily="Noto Sans, sans-serif" fontWeight="700" textAnchor="middle" fill="#acacac" fontSize="12">
              <text fontSize="7" fill="#5a5a5a" transform="translate(1368 196) rotate(-90)">BOTTOM</text>
              <text transform="translate(1322 196) rotate(90)">N</text><text transform="translate(1400 196) rotate(90)">S</text>
              <text transform="translate(1365 152) rotate(180)">W</text><text transform="translate(1361 234) rotate(90)">E</text>
            </g>
          </Pinned>
          <Pinned $x="8px" $y="381px" width="166" height="20" viewBox="0 0 166 20"><path d="M0 1l164 19" stroke="#c4c4c4" strokeDasharray="6 5" /></Pinned>
          <Pinned $x="2px" $y="690px" width="40" height="34" viewBox="1248 830 40 34">
            <path d="M1272 839.500h-22" stroke="#1c8a1c" /><path d="M1272.500 839v24" stroke="#a82020" />
            <g fontSize="14" fontFamily="Noto Sans, sans-serif"><text x="1247" y="841" fill="#239023">y</text><text x="1271" y="841" fill="#2424d8">z</text><text x="1269" y="864" fill="#a82020">x</text></g>
          </Pinned>
        </Viewport>

        <Command>
          <HGrip />
          <CommandTabs>{commandArt.map(([n, a]) => <CommandTab key={n} $on={n === 'Modify'} aria-label={n}><Svg20>{a}</Svg20></CommandTab>)}</CommandTabs>
          <CommandBody>
            <Stack>
              <NameRow><NameField aria-label="Object name" defaultValue="3 Objects Selected" /><Swatch aria-label="Object color" /></NameRow>
              <Select w={240} label="Modifier List" value="Modifier List" />
              <ModifierBox role="listbox" aria-label="Modifier stack" />
              <StackTools>
                <StackButton aria-label="Pin stack"><Svg20 w={22}><path d="M13 1l6 6-2 1-3 4v4L5 8h4l3-4zM8 12l-7 7" fill={DIM} stroke="#303030" /></Svg20></StackButton>
                <Sep $h={18} />
                <StackButton $on aria-label="Show end result"><Svg20 w={22}><path d="M5 1h11v3h-2v15H8V4H5z" fill="#4c6183" stroke="#26344b" /><path d="M9 5h3v13H9z" fill="#7b8797" stroke="#26344b" /></Svg20></StackButton>
                <Sep $h={18} />
                <StackButton aria-label="Make unique"><Svg20 w={22}><path d="M9 3h9v9" fill="none" stroke="#303030" strokeWidth="2" /><circle cx="5" cy="5" r="4.500" fill={DIM} stroke="#303030" /><circle cx="13" cy="14" r="5.500" fill="#555" stroke="#303030" /></Svg20></StackButton>
                <StackButton aria-label="Remove modifier"><Svg20 w={22}><path d="M2 2h16v3H2zM3 6h14v13H3z" fill={DIM} stroke="#303030" /><path d="M6.500 8v9M10 8v9M13.500 8v9" stroke="#2c2c2c" strokeWidth="2" /></Svg20></StackButton>
                <Sep $h={18} />
                <StackButton aria-label="Configure sets"><Svg20 w={22}><path d="M1 0h17v20H1z" fill={L} /><path d="M3 3h13M3 7h5v4H3zM3 13h5v5H3zM11 13h5v5h-5z" fill="none" stroke={D} strokeWidth="1.300" /><path d="M20-1l2 2L12 12l-3 1 1-3z" fill={Y} /></Svg20></StackButton>
              </StackTools>
              <Divider><i /></Divider>
              <Rollout />
            </Stack>
            <OuterTrack />
          </CommandBody>
        </Command>
      </Work>

      <TimeArea>
        <TimeGrip />
        <TimeMain>
          <Slider>
            <SliderButton $w={18} aria-label="Previous frame">&lt;</SliderButton>
            <SliderButton $w={154}>0 / 100</SliderButton>
            <SliderButton $w={18} aria-label="Next frame">&gt;</SliderButton>
          </Slider>
          <Ruler>
            <MiniCurve aria-label="Open mini curve editor"><svg width="20" height="14" viewBox="0 0 20 14"><path d="M0 1.500h4M0 5h4M0 8.500h4M0 12h4" stroke="#ddd" strokeWidth="1.200" /><path d="M6 6c2-6 4-6 6 1s4 6 6 1" fill="none" stroke={T} strokeWidth="1.500" /></svg></MiniCurve>
            <Frames>{Array.from({ length: 101 }, (_, i) => <Frame key={i} $major={i % 5 === 0} $now={i === 0}>{i % 5 === 0 ? i : null}</Frame>)}</Frames>
          </Ruler>
        </TimeMain>
      </TimeArea>

      <Status>
        <Listener>
          <ListenerLine $pink aria-label="Macro recorder" />
          <ListenerLine aria-label="MAXScript listener" placeholder="MAXScript Mini" />
        </Listener>
        <Prompt><p>3 Objects Selected</p><p>Click and drag to select and move objects</p></Prompt>
        <Transform>
          <CoordRow>
            <IconButton $w={18} aria-label="Isolate selection"><Svg20 w={18}><path d="M1 5V1h4M15 1h4v4M19 15v4h-4M5 19H1v-4" fill="none" stroke="#ddd" strokeWidth="1.500" /><path d="M5.500 5.500h9v9h-9z" fill={T} /></Svg20></IconButton>
            <IconButton $w={44} aria-label="Lock selection"><Svg20 w={18}><path d="M6 9V6a4 4 0 0 1 8 0v3" fill="none" stroke="#ddd" strokeWidth="2" /><path d="M3 9h14v11H3z" fill="#ddd" /><path d="M9 12h2v5H9z" fill="#333" /></Svg20></IconButton>
            <IconButton $w={26} $on aria-label="Absolute transform"><Svg20 w={18}><path d="M5 7v11M7 4h11M15 1l4 3-4 3M2 14l3 4 3-4" fill="none" stroke={S} strokeWidth="3.500" /><path d="M5 7v10M7 4h11M15 1l4 3-4 3M2 14l3 4 3-4" fill="none" stroke="#ddd" strokeWidth="1.800" /><circle cx="5" cy="4" r="3" fill="#8fa7c4" stroke="#ddd" /></Svg20></IconButton>
            <Coords>
              <CoordLabel htmlFor="cx">X:</CoordLabel><Spin w={84} id="cx" label="X" value="0,0" />
              <CoordLabel htmlFor="cy">Y:</CoordLabel><Spin w={84} id="cy" label="Y" value="0,0" />
              <CoordLabel htmlFor="cz">Z:</CoordLabel><Spin w={84} id="cz" label="Z" value="0,0" />
              <GridSize>Grid = 10,0</GridSize>
            </Coords>
          </CoordRow>
          <TagRow>
            <IconButton $w={25} $on aria-label="Time tag"><Svg20 w={16}><path d="M10 1l8 4v10l-8 4-8-4V5zM2 5l8 5 8-5M10 10v9" fill="#6f8fb8" stroke="#e0e0e0" strokeWidth="1.500" /></Svg20></IconButton>
            Add Time Tag
          </TagRow>
        </Transform>
        <Playback>
          <PlayRow>
            <IconButton $w={20} aria-label="Go to start"><Svg20><path d="M0 4h3v13H0zM11 5v11l-7-5.500zM20 5v11l-7-5.500z" fill={L} /></Svg20></IconButton>
            <Sep />
            <IconButton $w={24} aria-label="Previous"><Svg20><path d="M9 4v13L0 10.500zM11 4h3v13h-3zM16 4h3v13h-3z" fill={L} /></Svg20></IconButton>
            <PlayButton $w={32} aria-label="Play"><Svg20><path d="M2 1l16 9.500L2 20z" fill={L} /></Svg20></PlayButton>
            <IconButton $w={24} aria-label="Next"><Svg20><path d="M1 4h3v13H1zM6 4h3v13H6zM11 4v13l9-6.500z" fill={L} /></Svg20></IconButton>
            <Sep />
            <IconButton $w={22} aria-label="Go to end"><Svg20><path d="M17 4h3v13h-3zM0 5v11l7-5.500zM9 5v11l7-5.500z" fill={L} /></Svg20></IconButton>
          </PlayRow>
          <PlayRow>
            <IconButton $w={24} aria-label="Key mode"><Svg20 w={18}><path d="M8 4v12L1 10zM12 4v12l7-6z" fill={L} /></Svg20></IconButton>
            <Spin w={87} id="frame" label="Current frame" value="0" />
            <IconButton $w={32} aria-label="Time configuration"><Svg20 w={18}><circle cx="8" cy="8" r="8" fill={L} /><path d="M8 2v7h5" fill="none" stroke={K} strokeWidth="1.500" /><circle cx="15" cy="15" r="4" fill="none" stroke={Y} strokeWidth="2.500" /></Svg20></IconButton>
          </PlayRow>
        </Playback>
        <Keys>
          <SoftButton $w={53} $h={54} aria-label="Set keys"><svg width="36" height="36" viewBox="0 0 36 36" overflow="visible"><path d="M13 0h8v13h12v8H21v13h-8V21H1v-8h12z" fill={L} stroke={K} /><circle cx="24" cy="30" r="4" fill="none" stroke={K} strokeWidth="5" /><circle cx="24" cy="30" r="4" fill="none" stroke={T} strokeWidth="3" /><path d="M27 27l8-9M31 22l3 3" stroke={T} strokeWidth="3" /></svg></SoftButton>
          <Col><SoftButton $w={58} $h={25}>Auto</SoftButton><SoftButton $w={58} $h={25}>Set K.</SoftButton></Col>
          <Col>
            <Select w={141} label="Key filter selection" value="Selected" />
            <TangentRow>
              <TangentButton $w={28} aria-label="Tangent type"><Svg20><path d="M1 20c5-3 4-12 6-16M19 20c-5-3-4-12-6-16" fill="none" stroke={T} strokeWidth="2" /><path d="M1 2h18" stroke={L} /><path d="M7 0h6v5H7z" fill="#444" stroke={L} /><circle cx="1" cy="2" r="2" fill={L} /><circle cx="19" cy="2" r="2" fill={L} /></Svg20></TangentButton>
              <SoftButton $w={110} $h={25}>Filters...</SoftButton>
            </TangentRow>
          </Col>
        </Keys>
        <NavGrid>{nav.map(([n, a, f]) => <NavButton key={n} $fly={f} aria-label={n}><Svg20 w={19}>{a}</Svg20></NavButton>)}</NavGrid>
      </Status>
    </Page>
  );
}
